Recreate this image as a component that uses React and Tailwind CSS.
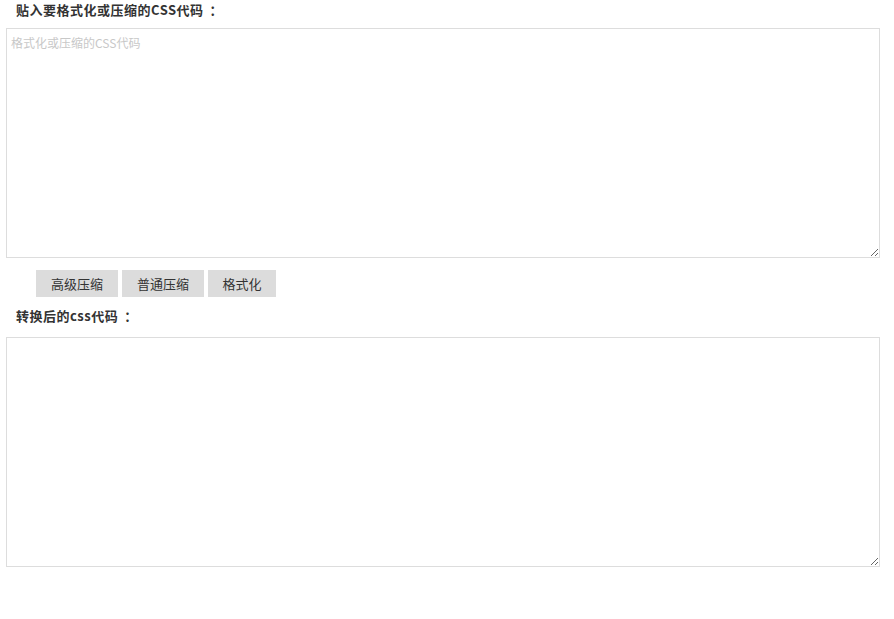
export default function App() {
  const font = { fontFamily: '"Microsoft YaHei", "Noto Sans CJK SC", sans-serif' };
  return (
    <div className="w-[894px] h-[619px] bg-white text-[#333]" style={font}>
      <div className="pl-[6px] pr-[14px] pt-[1px]">
        <div className="pl-[10px] pt-[1px] h-[27px] text-[13px] font-bold leading-[16px] tracking-[0.5px]">
          贴入要格式化或压缩的CSS代码<span className="ml-[6px]">：</span>
        </div>
        <textarea
          className="block w-full h-[230px] border border-[#ddd] px-[4px] py-[6px] text-[12px] leading-[16px] text-[#333] placeholder:text-[#c8c8c8] outline-none"
          placeholder="格式化或压缩的CSS代码"
          style={font}
        />
        <div className="flex gap-[4px] pl-[30px] mt-[12px] h-[27px]">
          <button className="h-[27px] w-[82px] bg-[#dcdcdc] text-[13px] text-[#333]">高级压缩</button>
          <button className="h-[27px] w-[82px] bg-[#dcdcdc] text-[13px] text-[#333]">普通压缩</button>
          <button className="h-[27px] w-[68px] bg-[#dcdcdc] text-[13px] text-[#333]">格式化</button>
        </div>
        <div className="pl-[10px] pt-[11px] h-[40px] text-[13px] font-bold leading-[16px] tracking-[0.5px]">
          转换后的css代码<span className="ml-[6px]">：</span>
        </div>
        <textarea
          className="block w-full h-[230px] border border-[#ddd] px-[4px] py-[6px] text-[12px] outline-none"
          style={font}
        />
      </div>
    </div>
  );
}
